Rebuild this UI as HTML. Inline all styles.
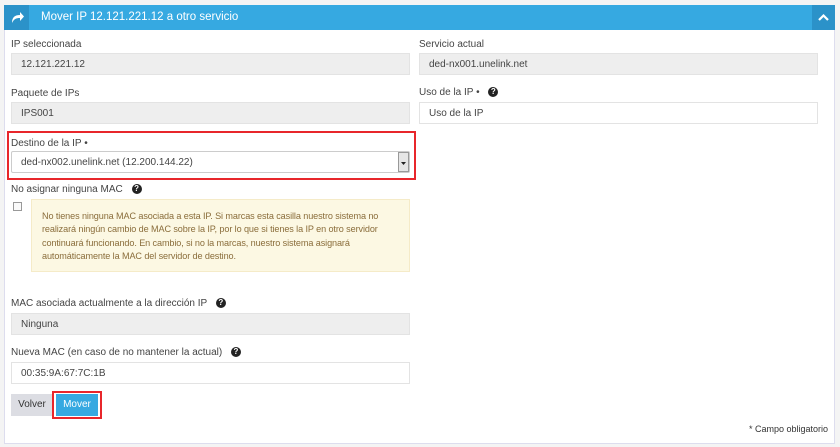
<!DOCTYPE html>
<html><head><meta charset="utf-8"><style>
*{box-sizing:border-box;margin:0;padding:0}
body{width:840px;height:447px;background:#f4f4f4;font-family:"Liberation Sans",sans-serif;font-size:10px;color:#333;position:relative;overflow:hidden}
.a{position:absolute}
.panel{left:4px;top:5px;width:831px;height:439px;background:#fff;border:1px solid #dde;}
.hdr{left:4px;top:5px;width:831px;height:25px;background:#36a9e1}
.ic{left:4px;top:5px;width:25px;height:25px;background:#2b92c9}
.col{left:812px;top:5px;width:23px;height:25px;background:#2b92c9}
.t{left:41px;top:11px;color:#fff;font-size:11.5px}
.lbl{font-size:10px;color:#444}
.in{height:22px;border:1px solid #e3e3e3;background:#eee;padding-left:9px;line-height:21px;font-size:10px;color:#444}
.w{background:#fff}
.q{display:inline-block;width:10px;height:10px;border-radius:50%;background:#222;color:#fff;font-size:8px;font-weight:bold;text-align:center;line-height:10px;vertical-align:middle;margin-left:6px}
.red{border:2px solid #e8262b}
</style></head><body>
<div class="a panel"></div>
<div class="a hdr"></div>
<div class="a ic"><svg width="25" height="25"><path d="M8 18 C8 12 11 10 16 10 L16 7 L20 11.5 L16 16 L16 13 C12 13 10 14 8 18Z" fill="#fff"/></svg></div>
<div class="a col"><svg width="23" height="25"><path d="M7 15 L11.5 10.5 L16 15" stroke="#fff" stroke-width="2.2" fill="none"/></svg></div>
<div class="a t">Mover IP 12.121.221.12 a otro servicio</div>

<div class="a lbl" style="left:11px;top:39px">IP seleccionada</div>
<div class="a in" style="left:11px;top:53px;width:399px">12.121.221.12</div>
<div class="a lbl" style="left:11px;top:88px">Paquete de IPs</div>
<div class="a in" style="left:11px;top:102px;width:399px">IPS001</div>

<div class="a lbl" style="left:419px;top:39px">Servicio actual</div>
<div class="a in" style="left:419px;top:53px;width:399px">ded-nx001.unelink.net</div>
<div class="a lbl" style="left:419px;top:87px">Uso de la IP • <span class="q">?</span></div>
<div class="a in w" style="left:419px;top:102px;width:399px">Uso de la IP</div>

<div class="a red" style="left:7px;top:131px;width:409px;height:49px"></div>
<div class="a lbl" style="left:11px;top:138px">Destino de la IP •</div>
<div class="a in w" style="left:11px;top:151px;width:399px;height:22px;border-color:#ccc;border-radius:2px">ded-nx002.unelink.net (12.200.144.22)</div>
<div class="a" style="left:398px;top:152px;width:11px;height:20px;background:#e6e6e6;border:1px solid #999"><svg width="9" height="18"><path d="M2 9 L7 9 L4.5 12Z" fill="#222"/></svg></div>

<div class="a lbl" style="left:11px;top:184px">No asignar ninguna MAC <span class="q">?</span></div>
<div class="a" style="left:13px;top:202px;width:9px;height:9px;border:1px solid #999;background:#fafafa"></div>
<div class="a" style="left:31px;top:199px;width:379px;height:73px;background:#fcf8e3;border:1px solid #f5ebc8;color:#8a6d3b;font-size:9.1px;letter-spacing:-0.1px;line-height:13.4px;padding:10px 8px 0 10px">No tienes ninguna MAC asociada a esta IP. Si marcas esta casilla nuestro sistema no realizará ningún cambio de MAC sobre la IP, por lo que si tienes la IP en otro servidor continuará funcionando. En cambio, si no la marcas, nuestro sistema asignará automáticamente la MAC del servidor de destino.</div>

<div class="a lbl" style="left:11px;top:298px">MAC asociada actualmente a la dirección IP <span class="q">?</span></div>
<div class="a in" style="left:11px;top:313px;width:399px">Ninguna</div>
<div class="a lbl" style="left:11px;top:347px">Nueva MAC (en caso de no mantener la actual) <span class="q">?</span></div>
<div class="a in w" style="left:11px;top:362px;width:399px">00:35:9A:67:7C:1B</div>

<div class="a" style="left:11px;top:394px;width:42px;height:22px;background:#dcdde3;color:#333;text-align:center;line-height:22px;font-size:10px">Volver</div>
<div class="a red" style="left:52px;top:391px;width:50px;height:28px"></div>
<div class="a" style="left:56px;top:394px;width:42px;height:22px;background:#36a9e1;color:#fff;text-align:center;line-height:22px;font-size:10px">Mover</div>

<div class="a" style="right:12px;top:424px;font-size:9px;color:#333">* Campo obligatorio</div>
</body></html>
